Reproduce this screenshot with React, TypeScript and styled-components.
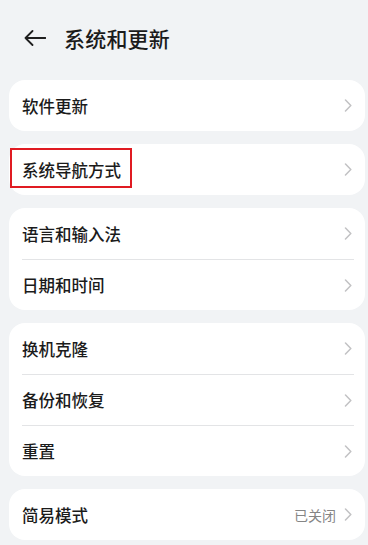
import React from "react";
import styled, { createGlobalStyle } from "styled-components";

const Global = createGlobalStyle`
  html, body { margin: 0; padding: 0; background: #f1f3f5; }
  body { font-family: "Noto Sans CJK SC", "Noto Sans", sans-serif; -webkit-font-smoothing: antialiased; }
  * { box-sizing: border-box; }
`;

const Page = styled.div`
  width: 368px;
  height: 545px;
  overflow: hidden;
  background: #f1f3f5;
  padding: 0 3px 0 9px;
  display: flex;
  flex-direction: column;
  gap: 13px;
`;

const Header = styled.div`
  height: 67px;
  display: flex;
  align-items: center;
  padding: 9px 0 0 15px;
  gap: 18px;
`;

const Title = styled.div`
  font-size: 21px;
  font-weight: 500;
  color: #1b1b1b;
  letter-spacing: 0.2px;
`;

const Card = styled.div`
  background: #ffffff;
  border-radius: 16px;
  display: flex;
  flex-direction: column;
  position: relative;
`;

const RowInner = styled.div`
  height: 51px;
  margin: 0 11px 0 13px;
  display: flex;
  align-items: center;
`;

const Row = styled.div`
  position: relative;
  & + & ${RowInner} {
    border-top: 1px solid #e3e4e6;
  }
`;

const Label = styled.div`
  flex: 1;
  font-size: 16.5px;
  font-weight: 500;
  color: #1b1b1b;
`;

const Value = styled.div`
  font-size: 14px;
  color: #858585;
  margin-right: 8px;
`;

const Chevron = styled.svg`
  width: 8px;
  height: 13px;
  margin-right: 2px;
  flex: none;
`;

const Highlight = styled.div`
  position: absolute;
  left: 1px;
  top: 4px;
  width: 122px;
  height: 40px;
  border: 2px solid #e01b22;
  pointer-events: none;
`;

const BackIcon = () => (
  <svg width="22" height="16" viewBox="0 0 22 16" fill="none">
    <path d="M8.5 1 L1.5 8 L8.5 15 M1.5 8 H21.5" stroke="#1f1f1f" strokeWidth="1.8" strokeLinecap="round" strokeLinejoin="round" />
  </svg>
);

const Arrow = () => (
  <Chevron viewBox="0 0 8 13" fill="none">
    <path d="M1.5 1 L6.8 6.5 L1.5 12" stroke="#c2c2c4" strokeWidth="1.5" strokeLinecap="round" strokeLinejoin="round" />
  </Chevron>
);

type Item = { label: string; value?: string; highlight?: boolean };

const groups: Item[][] = [
  [{ label: "软件更新" }],
  [{ label: "系统导航方式", highlight: true }],
  [{ label: "语言和输入法" }, { label: "日期和时间" }],
  [{ label: "换机克隆" }, { label: "备份和恢复" }, { label: "重置" }],
  [{ label: "简易模式", value: "已关闭" }],
];

export default function App() {
  return (
    <>
      <Global />
      <Page>
        <Header>
          <BackIcon />
          <Title>系统和更新</Title>
        </Header>
        {groups.map((g, gi) => (
          <Card key={gi}>
            {g.map((it) => (
              <Row key={it.label}>
                <RowInner>
                  <Label>{it.label}</Label>
                  {it.value && <Value>{it.value}</Value>}
                  <Arrow />
                </RowInner>
                {it.highlight && <Highlight />}
              </Row>
            ))}
          </Card>
        ))}
      </Page>
    </>
  );
}
